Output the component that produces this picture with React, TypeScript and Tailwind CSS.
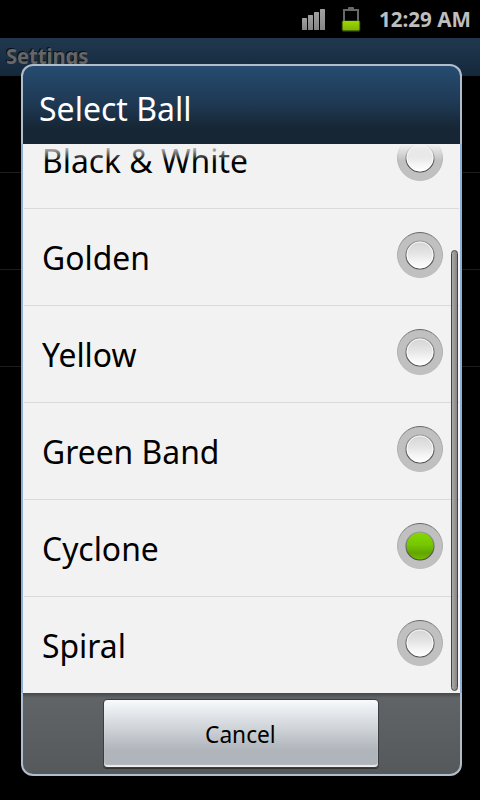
import React from 'react';

const balls = ['Black & White', 'Golden', 'Yellow', 'Green Band', 'Cyclone', 'Spiral'];

const StatusBar: React.FC = () => (
  <div className="flex h-[38px] items-center justify-end bg-black pr-[9px]">
    <svg width="60" height="38" viewBox="0 0 60 38" className="mr-[18px] shrink-0">
      <defs>
        <linearGradient id="signal" x1="0" y1="0" x2="0" y2="1">
          <stop offset="0" stopColor="#a0a0a0" />
          <stop offset="1" stopColor="#868686" />
        </linearGradient>
        <linearGradient id="charge" x1="0" y1="0" x2="0" y2="1">
          <stop offset="0" stopColor="#9ad800" />
          <stop offset="1" stopColor="#80b400" />
        </linearGradient>
      </defs>
      <rect x="1" y="18" width="5" height="12" rx="0.5" fill="url(#signal)" />
      <rect x="7" y="15" width="5" height="15" rx="0.5" fill="url(#signal)" />
      <rect x="13" y="12" width="5" height="18" rx="0.5" fill="url(#signal)" />
      <rect x="19" y="9" width="5" height="21" rx="0.5" fill="url(#signal)" />
      <path d="M43 22V10H57V22" fill="none" stroke="#686868" strokeWidth="2" />
      <rect x="47" y="7" width="6" height="3" rx="1" fill="#686868" />
      <rect x="40.5" y="20" width="19" height="12" rx="2" fill="#4d6c00" opacity="0.4" />
      <rect x="41.5" y="21" width="17" height="9.5" rx="1" fill="url(#charge)" />
    </svg>
    <span className="h-[38px] w-[92px] origin-left scale-x-[0.98] whitespace-nowrap text-[21px] leading-[39px] font-bold text-[#bebebe]">
      12:29 AM
    </span>
  </div>
);

const Radio: React.FC<{ id: number; checked: boolean }> = ({ id, checked }) => (
  <svg width="48" height="48" viewBox="0 0 48 48" className="shrink-0">
    <defs>
      <linearGradient id={`ring${id}`} x1="0" y1="0" x2="0" y2="1">
        <stop offset="0" stopColor="#666" />
        <stop offset="0.35" stopColor="#aaa" />
        <stop offset="1" stopColor="#bebebe" />
      </linearGradient>
      <linearGradient id={`edge${id}`} x1="0" y1="0" x2="0" y2="1">
        <stop offset="0" stopColor="#999" />
        <stop offset="1" stopColor="#484848" />
      </linearGradient>
      <linearGradient id={`knob${id}`} x1="0" y1="0" x2="0" y2="1">
        <stop offset="0" stopColor={checked ? '#86d900' : '#d4d4d4'} />
        <stop offset="0.45" stopColor={checked ? '#75c700' : '#e5e5e5'} />
        <stop offset="0.75" stopColor={checked ? '#62a500' : '#f6f6f6'} />
        <stop offset="1" stopColor={checked ? '#75bd00' : '#ffffff'} />
      </linearGradient>
    </defs>
    <circle cx="24" cy="24" r="22.500" fill="#c0c0c0" stroke={`url(#ring${id})`} />
    <circle cx="24" cy="24" r="14" fill={`url(#knob${id})`} stroke={`url(#edge${id})`} strokeWidth="1.2" />
    {!checked && <circle cx="24" cy="24" r="13" fill="none" stroke="#fff" strokeOpacity="0.75" />}
  </svg>
);

const SelectDialog: React.FC = () => (
  <div className="absolute top-[64px] left-[21px] flex h-[712px] w-[441px] flex-col overflow-hidden rounded-[12px] bg-[#b0bdcc] p-[2px]">
    <div className="flex h-[78px] shrink-0 items-center rounded-t-[10px] bg-linear-to-b from-[#264c71] via-[#1e3852] to-[#162634] to-80% pt-[6px] pl-4">
      <h2 className="origin-left scale-x-[0.97] text-[33px] leading-[45px] text-white">Select Ball</h2>
    </div>

    <div className="relative -mx-[2px] h-[549px] shrink-0 overflow-hidden border-x-2 border-[#8db0d8] bg-[#f2f2f2]">
      <ul className="-mt-[32px] px-px">
        {balls.map((ball, i) => (
          <li
            key={ball}
            className="flex h-[97px] items-center justify-between border-b border-[#dadada] pr-[15px] pb-1 pl-[18px] last:border-transparent"
          >
            <span className="mt-1 origin-left scale-x-[0.965] text-[33px] leading-[45px] whitespace-nowrap text-black">
              {ball}
            </span>
            <Radio id={i} checked={ball === 'Cyclone'} />
          </li>
        ))}
      </ul>
      <div className="absolute inset-x-0 top-0 h-[17px] bg-linear-to-b from-[#f2f2f2] to-transparent" />
      <div className="absolute top-[106px] right-[2px] h-[441px] w-[7px] rounded-full border border-[#444] bg-linear-to-r from-[#aaa] to-[#858585]" />
    </div>

    <div className="flex h-[81px] shrink-0 justify-center rounded-b-[10px] bg-linear-to-b from-[#44484a] from-0% via-[#606467] via-6% to-[#56595b] pt-[6px] pr-[2px]">
      <button className="h-[69px] w-[276px] rounded-[4px] border border-[#3b3d40] bg-linear-to-b from-[#f8fafc] via-[#ccd1d6] via-45% to-[#b0b4bb] to-75% text-[24px] text-black shadow-[inset_0_-2px_1px_#eee,0_1px_0_#333]">
        <span className="inline-block scale-x-[0.945]">Cancel</span>
      </button>
    </div>
  </div>
);

const App: React.FC = () => {
  return (
    <div className="relative h-[800px] w-[480px] overflow-hidden bg-black font-['Noto_Sans',sans-serif]">
      <StatusBar />
      <div className="h-[38px] bg-linear-to-b from-[#20384f] to-[#14283b] pl-[6px]">
        <h1 className="origin-left scale-x-[0.955] text-[21px] leading-[37px] font-bold text-[#666] [text-shadow:-1px_-1px_0_#0a0f14]">
          Settings
        </h1>
      </div>
      <div className="h-[97px] border-b border-[#1c1c1c]" />
      <div className="h-[97px] border-b border-[#1c1c1c]" />
      <div className="h-[97px] border-b border-[#1c1c1c]" />
      <SelectDialog />
    </div>
  );
};

export default App;
